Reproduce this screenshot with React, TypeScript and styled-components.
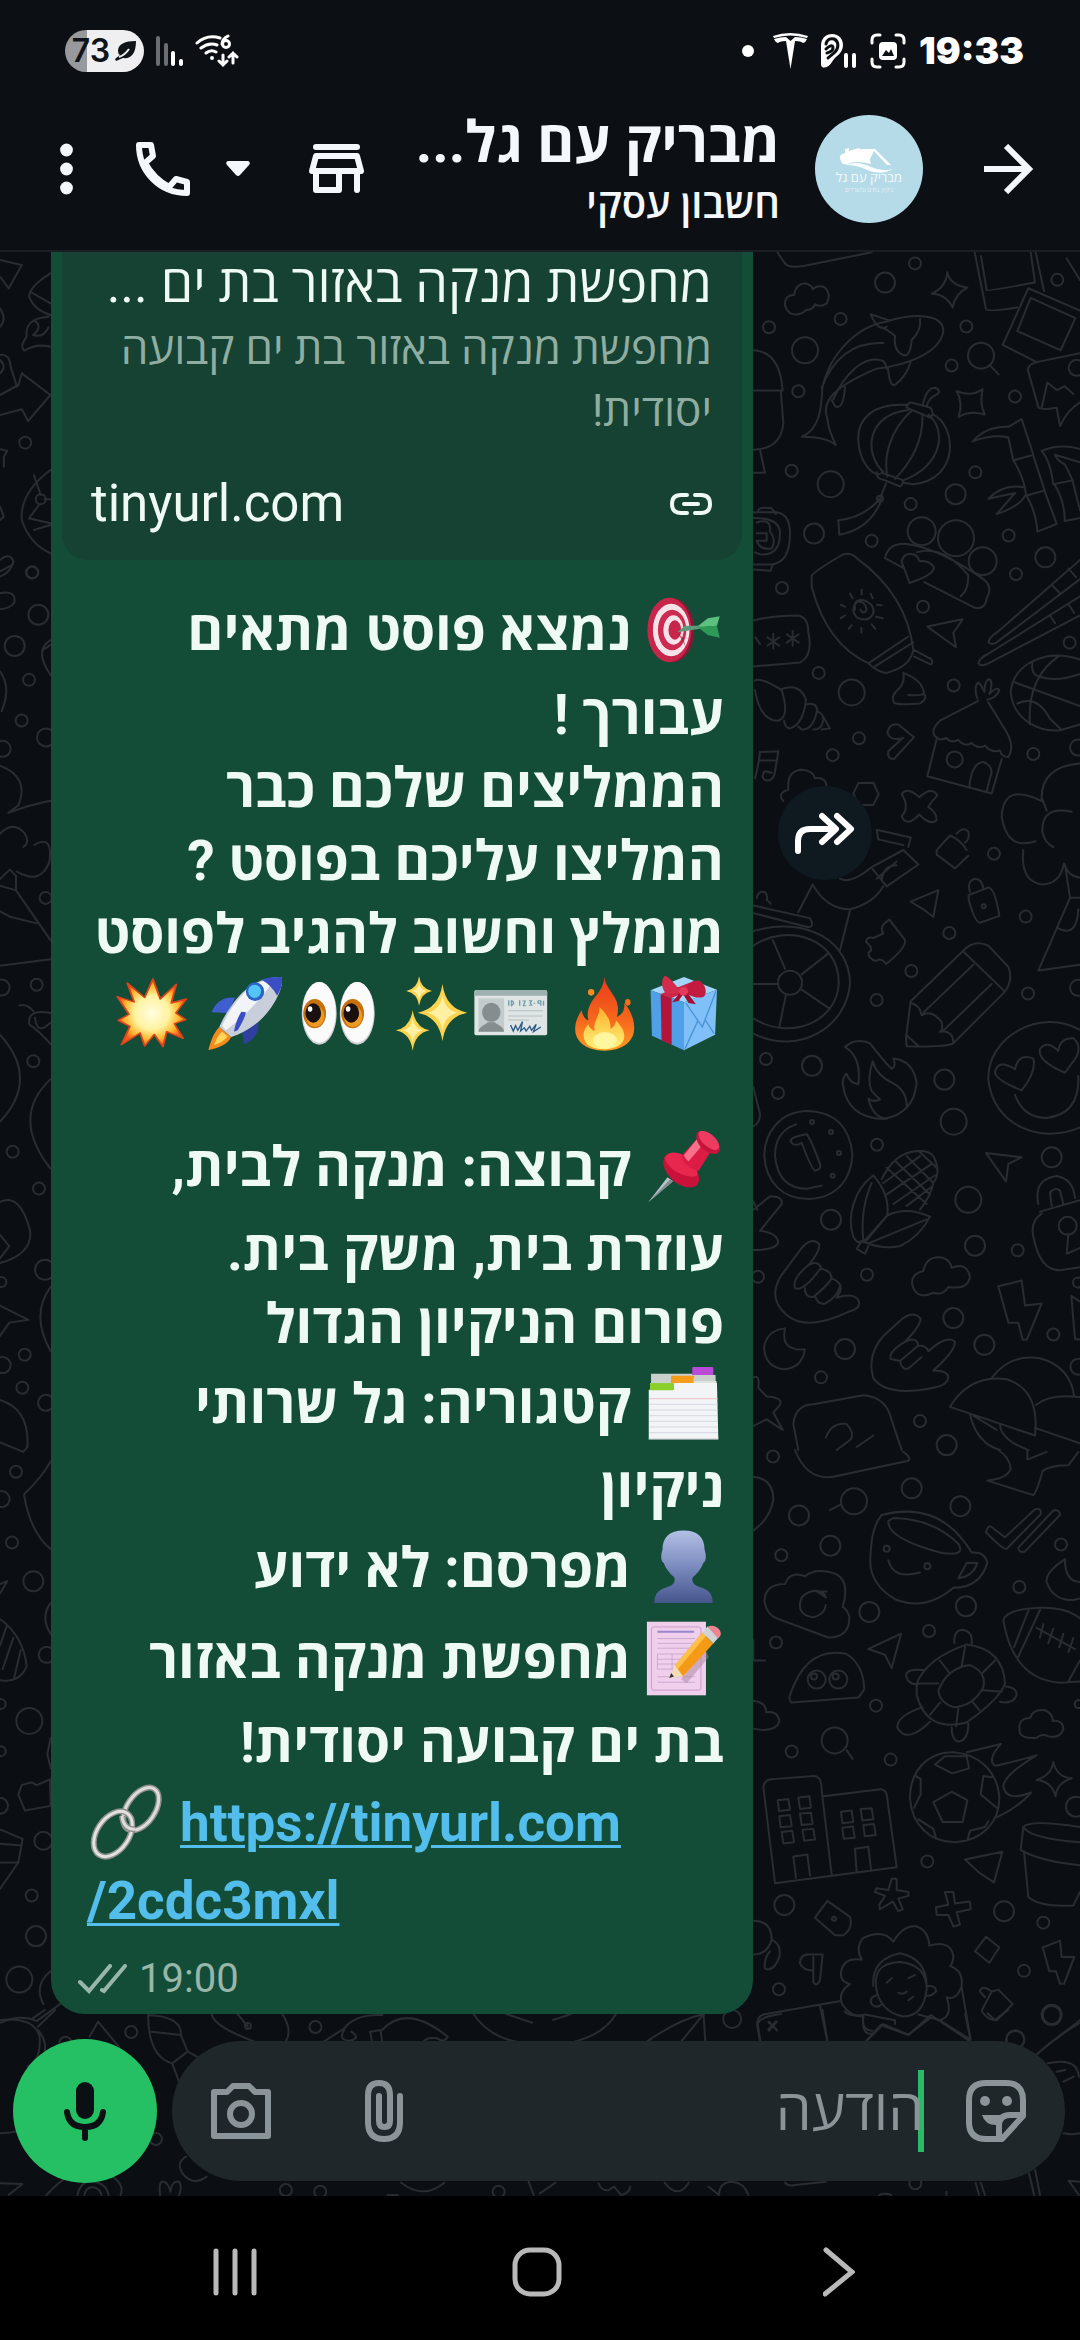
import React from "react";
import styled, { createGlobalStyle, css } from "styled-components";

const GlobalStyle = createGlobalStyle`
  *, *::before, *::after { box-sizing: border-box; }
  html, body { margin: 0; background: #000; }
  body { font-family: Roboto, "Open Sans", "Noto Sans", sans-serif; }
  button { border: 0; padding: 0; background: none; color: inherit; display: grid; place-items: center; flex: none; }
  svg { display: block; flex: none; }
`;

const ink = "#f4f7fc";

const Screen = styled.div`
  min-height: 100vh;
  display: flex;
  flex-direction: column;
  background: #0c1015;
  color: ${ink};
`;

/* ---------- status bar ---------- */

const StatusBar = styled.div`
  display: flex;
  justify-content: space-between;
  align-items: center;
  height: 101px;
  padding: 0 56px 0 65px;
  color: #fff;
`;

const StatusGroup = styled.div<{ $gap: number }>`
  display: flex;
  align-items: center;
  gap: ${(p) => p.$gap}px;
`;

const Battery = styled.div`
  display: flex;
  align-items: center;
  justify-content: center;
  gap: 5px;
  width: 79px;
  height: 42px;
  border-radius: 21px;
  background: linear-gradient(to right, #97999c 22px, #efeff1 22px);
  color: #101418;
  font: 600 32px/42px Inter, sans-serif;
`;

const Clock = styled.time`
  font: 900 37px/44px Inter, sans-serif;
`;

/* ---------- chat header ---------- */

const Header = styled.header`
  display: flex;
  align-items: center;
  padding: 0 47px 14px 60px;
  border-bottom: 2px solid #1b1f24;
`;

const Avatar = styled.div`
  display: grid;
  place-items: center;
  width: 108px;
  height: 108px;
  margin: 0 61px 0 35px;
  border-radius: 50%;
  background: #b5dae8;
  flex: none;
`;

const Contact = styled.div`
  flex: 1;
  min-width: 0;
  height: 135px;
`;

const ContactName = styled.h1`
  margin: 0;
  padding-top: 6px;
  font-size: 57px;
  line-height: 72px;
  font-weight: 700;
  white-space: nowrap;
`;

const ContactNote = styled.p`
  margin: 0;
  font-size: 40px;
  line-height: 52px;
  font-weight: 600;
`;

const HeaderActions = styled.div`
  display: flex;
  align-items: center;
  margin-right: 52px;
`;

const CallGroup = styled.div`
  display: flex;
  align-items: center;
  gap: 36px;
  margin: 0 59px 0 63px;
`;

/* ---------- conversation ---------- */

const Conversation = styled.main`
  flex: 1;
  display: grid;
  grid-template-columns: minmax(0, 1fr);
  background: #0b0f14;
  overflow: hidden;
  & > * { grid-area: 1 / 1; }
`;

const Backdrop = styled.svg`
  width: 100%;
  height: 100%;
  min-height: 0;
  contain: size;
  fill: none;
  stroke: #292d32;
  stroke-width: 2;
  stroke-linecap: round;
  stroke-linejoin: round;
  & * { vector-effect: non-scaling-stroke; }
`;

const Thread = styled.div`
  display: flex;
  flex-direction: column;
`;

const MessageRow = styled.div`
  flex: 1;
  display: flex;
  justify-content: flex-end;
  gap: 25px;
`;

const Bubble = styled.article`
  display: flex;
  flex-direction: column;
  width: 65%;
  margin-left: 51px;
  padding: 0 11px 7px;
  border-radius: 0 0 34px 34px;
  background: #144d37;
  color: #effaf4;
`;

const ForwardButton = styled.button`
  align-self: flex-end;
  width: 94px;
  height: 94px;
  margin-bottom: 1134px;
  border-radius: 50%;
  background: #0e1920;
  color: #fff;
`;

const Preview = styled.section`
  flex: 1;
  display: flex;
  flex-direction: column;
  padding: 0 30px 20px 29px;
  border-radius: 0 0 26px 26px;
  background: #164233;
`;

const PreviewTitle = styled.h2`
  margin: 0;
  font-size: 52px;
  line-height: 66px;
  font-weight: 400;
  white-space: nowrap;
`;

const PreviewText = styled.p`
  margin: 0;
  font-size: 44px;
  line-height: 62px;
  color: #90ada1;
`;

const PreviewSource = styled.div`
  display: flex;
  justify-content: space-between;
  align-items: center;
  margin-top: auto;
  font-size: 51px;
  line-height: 72px;
`;

const MessageText = styled.div`
  padding: 28px 18px 13px 25px;
  font-size: 55px;
  font-weight: 700;
`;

const Line = styled.div<{ $emoji?: boolean; $ltr?: boolean }>`
  display: flex;
  align-items: flex-start;
  gap: 13px;
  line-height: 73px;
  height: 73px;
  white-space: nowrap;
  ${(p) => p.$emoji && css`height: 91px; padding-top: 7px;`}
  ${(p) => p.$ltr && css`direction: ltr;`}
  ${(p) => p.$ltr && p.$emoji && css`height: 85px;`}
`;

const BlankLine = styled.div`
  height: 62px;
`;

const EmojiPair = styled.span`
  display: flex;
`;

const EmojiBox = styled.svg`
  width: 76px;
  height: 76px;
  margin: -3px 2px 0;
`;

const MessageLink = styled.a`
  color: #53bdeb;
  font-size: 53px;
  text-decoration: underline;
  text-decoration-thickness: 3px;
  text-underline-offset: 4px;
`;

const Receipt = styled.footer`
  display: flex;
  align-items: center;
  gap: 12px;
  direction: ltr;
  padding-left: 16px;
  font-size: 40px;
  line-height: 56px;
  color: #98b6a9;
`;

/* ---------- composer ---------- */

const Composer = styled.form`
  display: flex;
  align-items: center;
  gap: 15px;
  padding: 25px 15px 13px 13px;
`;

const Field = styled.div`
  flex: 1;
  min-width: 0;
  display: flex;
  align-items: center;
  height: 140px;
  padding: 0 39px;
  border-radius: 70px;
  background: #1f272a;
  color: #8b9498;
`;

const Caret = styled.span`
  width: 6px;
  height: 82px;
  margin: 0 42px 0 -6px;
  background: #2bbb68;
`;

const MessageInput = styled.input`
  flex: 1;
  min-width: 0;
  height: 100px;
  border: 0;
  padding: 0;
  outline: none;
  background: transparent;
  color: ${ink};
  font: 400 57px/100px Roboto, "Open Sans", "Noto Sans", sans-serif;
  &::placeholder { color: #8b9498; opacity: 1; }
`;

const FieldActions = styled.div`
  display: flex;
  align-items: center;
  gap: 94px;
`;

const MicButton = styled.button`
  width: 144px;
  height: 144px;
  border-radius: 50%;
  background: #25c063;
  color: #0b1014;
`;

/* ---------- system navigation ---------- */

const SystemNav = styled.nav`
  display: grid;
  grid-template-columns: repeat(3, 302px);
  justify-content: center;
  height: 144px;
  padding: 8px 7px 0 0;
  background: #000;
  color: #b9b9b9;
`;

/* ---------- emoji drawings ---------- */

const Emoji = ({ box, label, children }: { box: string; label: string; children: React.ReactNode }) => (
  <EmojiBox viewBox={box} preserveAspectRatio="none" role="img" aria-label={label}>
    {children}
  </EmojiBox>
);

const Target = () => (
  <Emoji box="1315 67 166 228" label="target">
    <ellipse cx="1372" cy="182" rx="48" ry="96" fill="#8f1633" />
    <ellipse cx="1366" cy="181" rx="48" ry="97" fill="#c8254b" />
    <ellipse cx="1370" cy="181" rx="40" ry="79" fill="#f6e3e8" />
    <ellipse cx="1372" cy="181" rx="31" ry="61" fill="#cc2a50" />
    <ellipse cx="1375" cy="181" rx="22" ry="44" fill="#f6e3e8" />
    <ellipse cx="1378" cy="181" rx="14" ry="29" fill="#c8254b" />
    <path d="M1384 190L1392 208L1402 232L1396 205Z" fill="#7d1a33" opacity=".6" />
    <path d="M1383 188L1400 168L1440 168L1440 176L1402 184Z" fill="#5f9a7b" />
    <path d="M1428 170L1450 146L1476 140L1470 168L1440 172Z" fill="#5cc17f" />
    <path d="M1428 172L1470 168L1476 204L1450 196Z" fill="#2f9a57" />
  </Emoji>
);

const Gift = () => (
  <Emoji box="1315 1216 166 228" label="gift">
    <path d="M1325 1262L1398 1222L1470 1260L1398 1298Z" fill="#a4d6fb" />
    <path d="M1325 1262L1398 1298V1442L1328 1398Z" fill="#4f9fe9" />
    <path d="M1398 1298L1470 1260L1466 1395L1398 1442Z" fill="#7fc0f8" />
    <path d="M1402 1300L1438 1372L1468 1264M1400 1438L1428 1354M1464 1392L1444 1350" fill="none" stroke="#4b93d6" strokeWidth="3" />
    <path d="M1347 1273L1371 1285V1426L1349 1412Z" fill="#b3143a" />
    <path d="M1347 1273L1420 1234L1440 1244L1371 1285Z" fill="#cf2247" />
    <path d="M1392 1266C1370 1228 1356 1212 1354 1222C1346 1240 1352 1266 1360 1272C1372 1276 1384 1272 1392 1266Z" fill="#d42a4c" />
    <path d="M1398 1262C1410 1232 1430 1226 1436 1238C1448 1252 1448 1276 1440 1282C1424 1288 1406 1278 1398 1262Z" fill="#c31b40" />
    <path d="M1390 1268L1372 1298L1386 1294L1396 1274L1408 1300L1424 1304L1404 1266Z" fill="#a30f32" />
    <ellipse cx="1397" cy="1265" rx="10" ry="13" fill="#e23a5c" />
  </Emoji>
);

const Fire = () => (
  <Emoji box="1139 1216 166 228" label="fire">
    <defs>
      <linearGradient id="flame" x1="0" y1="0" x2="0" y2="1">
        <stop offset="0" stopColor="#e8391c" />
        <stop offset=".6" stopColor="#f7691c" />
        <stop offset="1" stopColor="#fb9a24" />
      </linearGradient>
      <linearGradient id="core" x1="0" y1="0" x2="0" y2="1">
        <stop offset="0" stopColor="#ffb02a" />
        <stop offset="1" stopColor="#fff27a" />
      </linearGradient>
    </defs>
    <path d="M1223 1221C1224 1255 1250 1275 1252 1310C1253 1325 1252 1334 1250 1342C1262 1334 1268 1320 1266 1300C1280 1320 1288 1350 1288 1375C1288 1418 1260 1443 1223 1443C1184 1443 1158 1416 1159 1376C1160 1348 1168 1335 1173 1322C1176 1340 1180 1348 1188 1352C1182 1320 1194 1296 1206 1276C1216 1258 1222 1242 1223 1221Z" fill="url(#flame)" />
    <path d="M1212 1312C1226 1330 1238 1352 1236 1378C1244 1372 1248 1362 1248 1352C1264 1376 1272 1398 1262 1418C1250 1444 1196 1448 1182 1418C1172 1394 1180 1376 1188 1364C1190 1376 1196 1382 1202 1384C1196 1356 1214 1340 1212 1312Z" fill="url(#core)" />
    <ellipse cx="1224" cy="1412" rx="26" ry="24" fill="#fff6a0" />
    <ellipse cx="1194" cy="1268" rx="7" ry="10" fill="#f78a1c" />
    <ellipse cx="1274" cy="1298" rx="6" ry="10" fill="#f2701c" />
  </Emoji>
);

const IdCard = () => (
  <Emoji box="938 1222 166 228" label="ID card">
    <rect x="941" y="1267" width="159" height="136" rx="5" fill="#dfe5e4" />
    <path d="M941 1284V1272Q941 1267 946 1267H1095Q1100 1267 1100 1272V1284Z" fill="#9fb0b1" />
    <rect x="950" y="1292" width="56" height="100" fill="#c3cccc" />
    <ellipse cx="978" cy="1334" rx="20" ry="29" fill="#868d8e" />
    <path d="M950 1392C952 1374 966 1372 970 1364H986C990 1372 1004 1374 1006 1392Z" fill="#868d8e" />
    <path d="M1016 1298V1314M1022 1298V1314Q1032 1306 1022 1298M1040 1298V1314M1046 1300H1052L1048 1314H1054M1060 1299H1066L1063 1305L1066 1313H1060M1070 1307H1074M1080 1299V1307H1086V1299H1080M1086 1306V1314M1092 1299V1314" fill="none" stroke="#6fa0a8" strokeWidth="3" />
    <path d="M1015 1329H1090M1015 1345H1090M1015 1357H1060" stroke="#b5bfbf" strokeWidth="3" />
    <path d="M1020 1372L1026 1390L1031 1374L1036 1388L1046 1362L1042 1390L1050 1380L1054 1390L1062 1376L1066 1388L1076 1370L1070 1392L1086 1378" fill="none" stroke="#2b5a86" strokeWidth="3" />
  </Emoji>
);

const star = (x: number, y: number, w: number, h: number) =>
  `M${x} ${y - h}Q${x + w * 0.14} ${y - h * 0.14} ${x + w} ${y}Q${x + w * 0.14} ${y + h * 0.14} ${x} ${y + h}Q${x - w * 0.14} ${y + h * 0.14} ${x - w} ${y}Q${x - w * 0.14} ${y - h * 0.14} ${x} ${y - h}Z`;

const Sparkles = () => (
  <Emoji box="762 1216 166 228" label="sparkles">
    <g fill="#fbd34c">
      <path d={star(870, 1329, 54, 86)} />
      <path d={star(819, 1264, 28, 44)} />
      <path d={star(805, 1382, 37, 61)} />
    </g>
    <g fill="#fff0a4">
      <path d={star(870, 1329, 34, 54)} />
      <path d={star(819, 1264, 16, 26)} />
      <path d={star(805, 1382, 22, 36)} />
    </g>
  </Emoji>
);

const Eyes = () => (
  <Emoji box="560 1216 166 228" label="eyes">
    {[602, 685].map((x) => (
      <g key={x}>
        <ellipse cx={x} cy="1331" rx="38" ry="94" fill="#cfd0d4" />
        <ellipse cx={x} cy="1328" rx="36" ry="91" fill="#fbfbfc" />
        <ellipse cx={x - 10} cy="1332" rx="25" ry="44" fill="#c8720f" />
        <ellipse cx={x - 9} cy="1340" rx="20" ry="32" fill="#ec9a22" />
        <ellipse cx={x - 13} cy="1330" rx="17" ry="29" fill="#1a1010" />
        <ellipse cx={x - 20} cy="1318" rx="5" ry="8" fill="#fff" />
      </g>
    ))}
  </Emoji>
);

const Rocket = () => (
  <Emoji box="357 1216 166 228" label="rocket">
    <path d="M418 1284C392 1280 374 1300 367 1328L404 1330Z" fill="#3f5fd0" />
    <path d="M468 1350C474 1385 460 1412 438 1424L432 1370Z" fill="#2f3f9e" />
    <path d="M384 1372C370 1392 364 1420 360 1441C382 1436 402 1424 410 1402Z" fill="#f58a1f" />
    <path d="M390 1386C380 1398 376 1414 372 1426C386 1422 396 1412 402 1400Z" fill="#ffd65a" />
    <path d="M520 1222C470 1222 436 1258 412 1305C398 1332 390 1352 384 1372L410 1402C440 1388 474 1360 496 1316C514 1280 524 1246 520 1222Z" fill="#c9cfda" />
    <path d="M506 1226C468 1232 440 1262 418 1302C404 1328 398 1346 390 1368L398 1382C430 1350 470 1300 506 1226Z" fill="#f2f4f8" />
    <path d="M520 1222C502 1221 488 1224 476 1230Q498 1246 510 1278C520 1256 523 1238 520 1222Z" fill="#3a4fc4" />
    <ellipse cx="462" cy="1266" rx="20" ry="28" fill="#2d62c8" />
    <ellipse cx="461" cy="1265" rx="14" ry="20" fill="#52c4f5" />
    <path d="M432 1326C424 1344 418 1366 416 1386L424 1382C432 1364 440 1344 442 1328Z" fill="#3a4fc4" />
  </Emoji>
);

const burst =
  "M240 1228L256 1288L291 1244L280 1300L313 1288L290 1330L312 1350L287 1362L306 1406L270 1386L262 1431L243 1394L222 1429L212 1390L171 1425L190 1370L164 1352L188 1334L162 1281L199 1297L184 1240L222 1284Z";

const Collision = () => (
  <Emoji box="155 1216 166 228" label="collision">
    <defs>
      <radialGradient id="burst">
        <stop offset="0" stopColor="#fffde0" />
        <stop offset=".5" stopColor="#fff3a0" />
        <stop offset=".8" stopColor="#fdb62c" />
        <stop offset="1" stopColor="#ef5a1c" />
      </radialGradient>
    </defs>
    <path d={burst} fill="url(#burst)" stroke="#e0431c" strokeWidth="4" strokeLinejoin="round" />
  </Emoji>
);

const Pushpin = () => (
  <Emoji box="1315 114 166 228" label="pushpin">
    <path d="M1320 337L1362 262L1374 274Z" fill="#b9c2c6" />
    <path d="M1320 337L1368 268L1374 274Z" fill="#7f8b90" />
    <path d="M1354 206C1362 178 1388 190 1404 206C1428 232 1438 268 1426 286C1412 302 1378 286 1364 256C1356 240 1350 222 1354 206Z" fill="#c81239" />
    <path d="M1356 204C1366 176 1392 188 1408 206C1424 226 1430 246 1426 258C1406 268 1362 240 1356 204Z" fill="#e8274f" />
    <path d="M1426 148L1392 198C1396 222 1412 238 1430 242L1454 190Z" fill="#dc1c45" />
    <path d="M1426 148L1398 196C1400 204 1404 210 1408 214L1438 166Z" fill="#f9708c" />
    <path d="M1426 130C1434 112 1462 130 1472 156C1482 180 1474 194 1462 192C1442 186 1420 160 1426 130Z" fill="#c4143b" />
    <path d="M1430 128C1440 114 1464 134 1472 156C1478 174 1472 182 1464 180C1446 172 1428 150 1430 128Z" fill="#ee3b60" />
  </Emoji>
);

const IndexDividers = () => (
  <Emoji box="1315 826 166 228" label="card index dividers">
    <rect x="1416" y="832" width="46" height="28" rx="3" fill="#b94bd8" />
    <path d="M1326 852H1416V856H1467V882H1326Z" fill="#c9cfca" />
    <rect x="1370" y="858" width="50" height="24" rx="3" fill="#f59c1a" />
    <path d="M1324 880H1372V866H1420V874H1469V904H1324Z" fill="#dde2df" />
    <rect x="1370" y="860" width="49" height="20" fill="#f59c1a" />
    <rect x="1324" y="881" width="52" height="24" rx="3" fill="#8ad02c" />
    <path d="M1321 900H1376V888Q1376 880 1384 880H1470L1473 1049H1321Z" fill="#f3f4f6" />
    <rect x="1324" y="881" width="52" height="21" rx="3" fill="#8ad02c" />
    <path d="M1322 927H1472" stroke="#e8b6bd" strokeWidth="2" />
    <path d="M1322 944H1472M1322 961H1472M1322 978H1472M1322 995H1472M1322 1012H1472M1322 1029H1472" stroke="#ccd2dc" strokeWidth="2" />
    <path d="M1321 1048H1473" stroke="#c3c8cc" strokeWidth="3" />
  </Emoji>
);

const Silhouette = () => (
  <Emoji box="1315 89 166 221" label="bust in silhouette">
    <defs>
      <linearGradient id="bust" x1="0" y1="0" x2="0" y2="1">
        <stop offset="0" stopColor="#b3c0e6" />
        <stop offset=".55" stopColor="#7686ba" />
        <stop offset="1" stopColor="#46558c" />
      </linearGradient>
    </defs>
    <path d="M1397 93C1428 93 1443 112 1443 150C1446 160 1448 182 1440 188C1436 206 1424 222 1417 230C1414 244 1420 252 1432 258C1452 266 1460 276 1461 304H1333C1334 276 1342 266 1362 258C1374 252 1380 244 1377 230C1370 222 1358 206 1354 188C1346 182 1348 160 1351 150C1351 112 1366 93 1397 93Z" fill="url(#bust)" />
  </Emoji>
);

const Memo = () => (
  <Emoji box="1315 352 166 221" label="memo">
    <rect x="1317" y="357" width="129" height="214" fill="#efcfeb" />
    <rect x="1327" y="372" width="108" height="184" rx="6" fill="none" stroke="#c58fc4" strokeWidth="2" />
    <path d="M1340 386H1420" stroke="#9a86d0" strokeWidth="6" />
    <path d="M1340 406H1422M1340 420H1422M1340 434H1422M1340 451H1400M1340 466H1390M1340 480H1384M1340 495H1376M1340 451V495M1372 451V495M1340 517H1422M1340 533H1422" stroke="#c4a2cb" strokeWidth="2" fill="none" />
    <path d="M1392 524L1446 440L1452 460L1404 536Z" fill="#a983a4" opacity=".5" />
    <path d="M1378 484L1438 388L1462 420L1396 516Z" fill="#f59a16" />
    <path d="M1378 484L1438 388L1446 398L1384 496Z" fill="#ffc04a" />
    <path d="M1438 388L1450 370L1474 402L1462 420Z" fill="#cdd3d6" />
    <path d="M1450 372C1458 364 1472 370 1477 384C1480 394 1478 400 1472 405Z" fill="#ee8490" />
    <path d="M1378 484L1396 516L1366 521Z" fill="#f3dcb8" />
    <path d="M1370 506L1376 516L1366 521Z" fill="#3a3032" />
  </Emoji>
);

const LinkEmoji = () => (
  <Emoji box="0 0 76 76" label="link">
    <g fill="none">
      <ellipse cx="52" cy="25" rx="24" ry="14" transform="rotate(-56 52 25)" stroke="#8f8f8f" strokeWidth="6" />
      <ellipse cx="52" cy="25" rx="24" ry="14" transform="rotate(-56 52 25)" stroke="#dcdcd8" strokeWidth="3" />
      <ellipse cx="24" cy="50" rx="25" ry="16" transform="rotate(-56 24 50)" stroke="#8f8f8f" strokeWidth="6" />
      <ellipse cx="24" cy="50" rx="25" ry="16" transform="rotate(-56 24 50)" stroke="#e2e2de" strokeWidth="3" />
      <path d="M33 32C34 42 40 46 46 45" stroke="#8f8f8f" strokeWidth="6" />
      <path d="M33 32C34 42 40 46 46 45" stroke="#dcdcd8" strokeWidth="3" />
    </g>
  </Emoji>
);

/* ---------- interface icons ---------- */

const Leaf = () => (
  <svg width="22" height="20" viewBox="0 0 22 20" fill="currentColor">
    <path d="M21 0C10 0 3 3 3 10Q3 13 5 14L0 18L1 20L8 17C15 18 21 14 21 0Z" />
    <path d="M4 16Q10 14 14 8" stroke="#efeff1" strokeWidth="2" fill="none" />
  </svg>
);

const Signal = () => (
  <svg width="27" height="30" viewBox="0 0 27 30" stroke="currentColor" strokeWidth="4" strokeLinecap="round">
    <path d="M2 2V28M10 9V28" stroke="#6b6e72" />
    <path d="M17 17V28M25 25V28" />
  </svg>
);

const Wifi = () => (
  <svg width="44" height="34" viewBox="0 0 44 34" fill="none" stroke="currentColor" strokeWidth="3" strokeLinecap="round">
    <path d="M2 9Q12 0 25 4M6 14Q14 8 22 11M11 19Q16 15 21 18" />
    <circle cx="17" cy="24" r="2" fill="currentColor" stroke="none" />
    <path d="M33 2Q27 5 27 10" />
    <circle cx="31" cy="10" r="3.500" />
    <path d="M28 21V31M24 27L28 31L32 27M38 29V19M34 23L38 19L42 23" strokeWidth="3" />
  </svg>
);

const Dot = styled.span`
  width: 12px;
  height: 12px;
  margin-right: 6px;
  border-radius: 50%;
  background: #fff;
`;

const Tesla = () => (
  <svg width="35" height="36" viewBox="0 0 35 36" fill="currentColor">
    <path d="M0 3Q17 -3 35 3L34 5Q17 0 1 5Z" />
    <path d="M1 6Q7 4 13 4L17.500 8L22 4Q28 4 34 6Q33 9 30 10Q28 8 22 8L17.500 36L13 8Q7 8 5 10Q2 9 1 6Z" />
  </svg>
);

const Ear = () => (
  <svg width="36" height="34" viewBox="0 0 36 34" fill="none">
    <path d="M0 12C0 4 5 0 11 0C18 0 22 5 22 11C22 20 14 22 11 28C8 34 0 36 0 30Z" fill="#fff" />
    <path d="M5 10C6 5 10 4 13 5C18 7 18 14 14 18C11 21 9 22 7 24M5 15C8 12 12 10 12 14C12 18 8 18 6 19" stroke="#0c1015" strokeWidth="3" strokeLinecap="round" />
    <path d="M25 21V32M33 21V32" stroke="#fff" strokeWidth="4" strokeLinecap="round" />
  </svg>
);

const Capture = () => (
  <svg width="36" height="36" viewBox="0 0 36 36" fill="none">
    <path d="M2 10V7Q2 2 7 2H10M26 2H29Q34 2 34 7V10M34 26V29Q34 34 29 34H26M10 34H7Q2 34 2 29V26" stroke="#fff" strokeWidth="3" strokeLinecap="round" />
    <rect x="9" y="9" width="18" height="18" rx="4" fill="#fff" />
    <path d="M12 23L16 17L19 20L21 16L24 23Z" fill="#0c1015" />
  </svg>
);

const BackArrow = () => (
  <svg width="49" height="50" viewBox="0 0 49 50" fill="none" stroke="currentColor" strokeWidth="6">
    <path d="M0 25H45M22 2L45 25L22 48" />
  </svg>
);

const AvatarLogo = () => (
  <svg width="72" height="48" viewBox="0 0 72 48" fill="#fff">
    <path d="M8 16Q4 10 12 8V4L16 3V6L26 3L36 12L38 19Q24 15 14 19Q9 20 8 16Z" />
    <path d="M28 4H42L58 20H54L41 6L36 16Z" />
    <path d="M12 20Q24 15 38 22Q50 27 60 24Q48 31 34 25Q24 20 12 20Z" opacity=".9" />
    <g fontFamily='"Open Sans", sans-serif' textAnchor="middle" direction="rtl">
      <text x="36" y="37" fontSize="13" opacity=".85">מבריק עם גל</text>
      <text x="36" y="47" fontSize="6" opacity=".6">ניקיון בתים ומשרדים</text>
    </g>
  </svg>
);

const Store = () => (
  <svg width="56" height="50" viewBox="0 0 56 50" fill="none" stroke="currentColor" strokeWidth="6" strokeLinecap="round" strokeLinejoin="round">
    <path d="M7 3H48M7 12H48L52 27H3ZM7 27V46H30V27M48 27V46" />
  </svg>
);

const DropArrow = () => (
  <svg width="24" height="16" viewBox="0 0 24 16" fill="currentColor">
    <path d="M2 0H22Q25 1 23 4L14 14Q12 16 10 14L1 4Q-1 1 2 0Z" />
  </svg>
);

const Phone = () => (
  <svg width="54" height="54" viewBox="0 0 54 54" fill="none" stroke="currentColor" strokeWidth="6" strokeLinejoin="round">
    <path d="M3 3H15L17 14L9 21C15 32 22 39 33 45L40 37L51 40V51C24 51 3 30 3 3Z" />
  </svg>
);

const More = () => (
  <svg width="13" height="52" viewBox="0 0 13 52" fill="currentColor">
    <circle cx="6.500" cy="7" r="6.400" />
    <circle cx="6.500" cy="26" r="6.400" />
    <circle cx="6.500" cy="45" r="6.400" />
  </svg>
);

const LinkIcon = () => (
  <svg width="42" height="22" viewBox="0 0 42 22" fill="none" stroke="currentColor" strokeWidth="4" strokeLinecap="round">
    <path d="M17 2H11Q2 2 2 11Q2 20 11 20H17M25 2H31Q40 2 40 11Q40 20 31 20H25M14 11H28" />
  </svg>
);

const Forward = () => (
  <svg width="62" height="44" viewBox="0 0 62 44" fill="none" stroke="currentColor" strokeWidth="6" strokeLinecap="round" strokeLinejoin="round">
    <path d="M4 40V30Q4 18 16 18H38M28 5L42 18L28 31M43 5L57 18L43 31" />
  </svg>
);

const Ticks = () => (
  <svg width="49" height="30" viewBox="0 0 49 30" fill="none" stroke="currentColor" strokeWidth="4" strokeLinecap="round">
    <path d="M2 18L11 27L32 2M24 26L26 27L47 2" />
  </svg>
);

const Sticker = () => (
  <svg width="60" height="62" viewBox="0 0 60 62" fill="none" stroke="currentColor" strokeWidth="6" strokeLinejoin="round">
    <path d="M20 3H40Q57 3 57 20V36L36 59H20Q3 59 3 42V20Q3 3 20 3Z" />
    <path d="M57 35H44Q33 35 33 46V59" />
    <circle cx="19" cy="21" r="5" fill="currentColor" stroke="none" />
    <circle cx="41" cy="21" r="5" fill="currentColor" stroke="none" />
    <path d="M16 35H40L34 45H30Q19 45 16 35Z" fill="currentColor" stroke="none" />
  </svg>
);

const Clip = () => (
  <svg width="38" height="62" viewBox="0 0 38 62" fill="none" stroke="currentColor" strokeWidth="6" strokeLinecap="round">
    <path d="M35 16V42Q35 59 19 59Q3 59 3 42V15Q3 3 14 3Q25 3 25 15V41Q25 47 19.500 47Q14 47 14 41V16" />
  </svg>
);

const Camera = () => (
  <svg width="60" height="56" viewBox="0 0 60 56" fill="none" stroke="currentColor" strokeWidth="6" strokeLinejoin="round">
    <path d="M3 9H16L22 3H38L44 9H57V53H3Z" />
    <circle cx="30" cy="31" r="11" />
  </svg>
);

const Mic = () => (
  <svg width="42" height="60" viewBox="0 0 42 60" fill="none" stroke="currentColor" strokeWidth="6" strokeLinecap="round">
    <rect x="12" y="1" width="18" height="37" rx="9" fill="currentColor" stroke="none" />
    <path d="M3 31Q5 46 21 46Q37 46 39 31M21 46V57" />
  </svg>
);

/* ---------- doodle wallpaper ---------- */

type Patch = { at: string; sx: number; sy: number; dots: string; lines: string[] };

const patches: Patch[] = [
  {
    at: "translate(740 250)", sx: 3, sy: 2.613,
    dots: "525 35 6,87 202 6,302 180 6,679 200 6,952 78 6,175 369 6,635 302 6,825 383 6,155 577 6,512 664 6,706 581 6,395 760 6,806 746 6,126 883 6,828 847 6,549 932 6,236 1105 6,641 1138 6,989 1026 6,357 1276 6,278 1320 6,880 1317 6,435 85 10,222 741 10,647 638 10,916 803 10,644 1331 8,195 262 13,272 612 13,335 1156 13,723 276 13,545 735 14,648 753 18,728 813 14,1010 308 8,1014 1300 8,420 650 3",
    lines: [
      "M112 6L135 35Q145 48 190 42L395 6M704 6L738 155Q740 162 832 150M887 6L912 108M723 16L740 105Q742 108 885 85L872 6M980 22L1020 78",
      "M865 100L1020 158M865 100L788 248L890 293L1020 270M872 125L1006 178L962 262L832 212ZM890 293Q862 300 864 315L895 410Q900 420 950 412L960 460Q980 420 1020 398M905 412L922 346L950 366L974 356L1000 376",
      "M150 165Q125 145 140 125Q152 115 162 118Q168 88 195 87Q218 92 218 103Q232 90 255 98Q275 115 260 140Q240 150 226 142Q214 158 200 156Q175 175 150 165Z",
      "M622 58Q630 92 682 98Q645 115 638 150Q618 115 575 114Q618 98 622 58ZM650 368Q690 385 728 364Q718 400 734 430Q690 418 656 436Q670 400 650 368ZM748 300L776 325",
      "M186 488C235 470 245 420 247 360C270 270 350 200 440 187C520 165 610 165 610 212C600 270 500 300 410 310C300 350 240 390 262 440Q265 470 288 510Q260 488 186 488M392 168Q415 215 440 200M392 168L448 184M540 180Q545 210 515 235Q510 290 480 270Q460 255 465 225Q440 205 415 200M245 360C280 280 340 240 430 243M280 390C310 330 370 270 430 290Q440 300 440 310M444 310Q450 360 465 352Q500 330 512 292M315 358Q310 420 285 408Q280 400 275 392",
      "M500 405C400 400 350 440 355 500C360 560 400 590 420 585M505 418C380 430 370 530 430 580M515 420C450 470 430 540 442 592M547 428C550 480 530 540 465 598M565 430C620 470 610 560 490 602M580 430C650 460 660 600 520 612L490 608M500 410Q505 395 520 400L572 412Q585 430 570 438L500 412M410 580Q410 600 430 600L480 618Q495 608 485 600L425 582M548 405Q560 360 585 360Q610 370 585 380Q565 390 560 408M438 610L420 650Q370 700 295 706L298 744Q390 730 425 652",
      "M698 500Q740 460 805 462L845 442L880 535L820 550L805 490Q760 480 698 500M822 552Q855 600 858 642L914 628L880 538M860 642Q890 690 892 736L950 716L914 630M745 650Q790 610 850 620M745 650L825 635L770 690Q840 670 855 642M905 525Q960 505 1020 520M905 525Q930 550 940 612L998 602L975 560Q950 550 945 535L1020 555M945 615Q975 660 974 708L1020 700M998 604L1020 680",
      "M435 805Q445 765 500 768Q600 780 730 860Q760 880 740 910Q735 940 705 935L553 868M435 805L488 830M530 790Q610 770 685 850Q685 890 662 905M508 868L485 815Q490 790 520 795Q535 800 538 813Q570 810 582 830Q580 850 508 870Z",
      "M215 850Q240 830 310 795Q335 790 350 805Q500 900 520 1045Q510 1090 440 1105Q415 1105 385 1080Q260 1030 215 880ZM385 1080L505 1010M405 1088L520 1025M522 1045L575 1070Q580 1085 570 1082L522 1062M345 940Q340 910 370 915Q405 925 400 950Q385 975 350 960Q330 940 350 920Q375 915 380 940Q370 955 362 940M365 888V900M392 898L398 910M411 927L425 928M408 958L428 962M395 978L406 990M364 988V1000M335 980L326 990M315 955L302 962M315 932L302 927M338 910L330 898",
      "M40 262Q120 265 128 367H40M122 367L130 450Q125 520 40 522M60 522L75 582H40M40 685H110Q150 690 150 740Q150 820 90 822H40M55 680Q60 670 95 675L108 690M40 700Q120 700 120 740Q120 800 60 795L45 790M50 712Q95 700 90 735Q110 760 95 780Q60 785 50 760H80V740H50M98 822L92 838L40 835M40 968Q100 955 175 955Q205 960 205 1000Q220 1060 180 1078L40 1088M100 1003V1042M82 1012L118 1034M118 1012L82 1034M158 995V1034M140 1004L176 1026M176 1004L140 1026M46 1012L60 1030",
      "M45 1125Q60 1115 125 1150Q150 1220 115 1230Q60 1230 45 1150M122 1148Q180 1130 198 1175Q190 1240 150 1250Q135 1250 132 1230M198 1188Q225 1180 232 1200Q220 1255 185 1253L175 1245M230 1205Q250 1210 250 1228Q245 1255 220 1253M250 1220L270 1250L245 1253M45 1380Q55 1350 60 1312L115 1310L104 1368Q98 1390 75 1385Q60 1375 75 1362L95 1366M58 1334H105",
      "M562 984L668 965L640 1000L648 1038ZM490 1105Q495 1130 478 1145Q450 1165 462 1183Q480 1190 540 1185Q565 1170 552 1160Q540 1165 505 1163M490 1105Q550 1125 552 1160M490 1275Q450 1285 442 1260Q450 1235 475 1240L522 1273L462 1330Q440 1330 445 1310L485 1278",
      "M715 1080Q720 1065 745 1055L1020 905M715 1080Q725 1090 745 1080L1020 955M745 1025Q750 1010 770 1000L1020 810M745 1025Q760 1035 775 1022L1020 860M935 875L958 895M985 832L1008 855M930 955L945 975M985 925L1002 948",
      "M1020 1070C920 1040 820 1080 812 1155C820 1230 900 1260 960 1255L1020 1240M825 1130L1020 1192M878 1075Q870 1110 900 1115Q950 1130 1020 1108M955 1062Q860 1120 870 1240M832 1185Q890 1160 930 1225L965 1254",
      "M712 1172Q700 1140 715 1130Q728 1140 733 1155Q735 1120 750 1122Q760 1135 748 1160Q770 1140 778 1150Q770 1170 742 1175M715 1178L600 1230Q570 1255 585 1270Q600 1285 618 1275Q635 1290 655 1280Q675 1300 695 1288Q715 1305 735 1295Q755 1315 780 1308Q785 1325 805 1325Q825 1300 800 1260L745 1182M590 1278L562 1375L755 1420L785 1330M688 1402Q695 1340 730 1338Q765 1350 750 1380L740 1415",
      "M485 1422Q500 1400 538 1430Q575 1400 592 1425Q575 1440 565 1455Q590 1470 590 1490Q570 1505 538 1475Q500 1510 485 1480Q510 1455 485 1422M340 1420L355 1393L400 1392L416 1422L400 1450L355 1450ZM130 1440Q110 1420 145 1410Q140 1360 185 1358Q220 1360 225 1380Q260 1375 260 1408M1020 1342Q900 1350 905 1440Q790 1390 785 1480Q800 1570 887 1545M905 1430L920 1465M995 1468Q905 1450 907 1520Q915 1550 940 1560M410 1515L512 1535L505 1560M410 1515L415 1540L490 1555M590 1568L630 1530Q660 1540 680 1568M650 1525Q670 1505 685 1520Q690 1540 675 1548",
    ],
  },
  {
    at: "translate(740 850)", sx: 3, sy: 2.613,
    dots: "762 10 6,857 174 6,628 217 6,514 316 6,410 392 6,864 375 6,78 546 6,114 635 6,411 770 6,381 1110 6,833 1046 6,940 1266 6,243 1378 6,540 1492 6,54 1115 6,216 564 10,613 600 10,935 803 10,273 966 10,705 1034 10,640 1223 10,733 1293 10,315 1304 10,1014 360 8,620 1555 10,1015 1350 8,641 710 13,685 914 13,983 982 9,150 347 12,216 711 2,273 737 2,297 792 2,278 851 2,731 147 2,1014 1130 5",
    lines: [
      "M40 145L210 178Q225 200 205 202L40 165M50 125Q55 105 75 110Q85 120 80 130L92 140M175 162L218 90Q260 155 330 155Q400 140 430 95M330 158L300 262M300 75Q330 90 395 45L490 0L535 38L440 95L398 50M410 75L470 30M425 80Q430 40 470 40",
      "M40 212C200 170 330 240 330 350C320 460 180 540 40 480M40 250C140 190 300 230 296 350C290 450 150 500 40 440M98 235L135 310M262 272L185 325M270 415L185 365M118 462L138 378M40 350H112",
      "M512 135L595 105L580 175L550 155ZM686 118L745 98Q765 100 778 172L720 190Q705 190 686 130ZM690 110Q680 80 705 75Q725 75 730 100M378 240Q380 225 400 230L430 218Q415 200 448 182L495 235Q500 255 438 298Q425 280 408 290Q385 285 385 268Q405 260 378 240M590 12L645 48L685 15M590 0V12",
      "M512 395L680 255Q710 235 745 250L805 305Q820 340 795 370L640 505Q620 515 500 513L498 490ZM670 265L795 370M512 400Q540 405 545 432Q575 415 605 450Q610 470 600 475Q640 470 640 505M550 425L700 300M610 472L755 350M500 485L535 512",
      "M850 0Q840 80 905 90Q960 90 972 35Q985 70 1020 72M975 38L990 125L895 315L1020 300M990 125H1020M955 205Q1010 230 1015 155",
      "M1020 470C900 410 740 490 745 600C760 720 900 770 1020 725M825 640Q850 700 920 700Q1020 690 1015 590M845 628Q765 600 765 580Q775 545 825 573Q835 530 880 545Q890 580 845 628ZM975 582Q890 550 900 520Q920 495 955 525Q960 490 1000 492Q1025 510 1010 540Z",
      "M315 515Q345 490 390 505Q430 550 455 572Q470 565 460 545Q520 550 530 610Q520 690 430 703Q320 700 308 610Q310 590 320 585Q330 610 355 612Q365 540 315 515M398 552Q410 590 460 610Q500 630 500 668M398 552Q380 600 395 630L420 652Q400 660 385 650Q400 700 440 702",
      "M205 682C120 682 72 740 73 800C78 870 130 912 205 912C290 910 335 860 337 795C330 730 290 685 205 682ZM168 717Q105 735 105 800Q115 885 200 885L245 877M152 760Q150 750 200 743Q210 750 240 820Q245 835 225 838Q215 835 185 765Q160 778 152 760M738 792L845 803L805 820L798 866Z",
      "M400 850C340 890 320 960 340 1010Q350 1030 365 1022M400 850Q450 900 442 955L370 1025M395 870Q360 940 370 1020M570 958Q500 930 442 955L375 1025Q430 1045 480 1035Q540 1010 570 958M560 965L385 1028M365 1022L350 1042L375 1055L385 1035M425 860Q460 800 510 790Q560 780 580 800Q605 840 580 870Q575 900 540 940M440 830L560 925M465 812L570 900M500 800L580 870M540 790L590 830M430 870L540 800M440 900L575 820M460 925L585 850M500 930L575 880",
      "M520 1145Q505 1110 550 1100Q560 1060 605 1065Q630 1070 635 1092Q680 1075 690 1115Q685 1150 625 1142Q610 1165 580 1157Q535 1175 520 1145M775 1140L845 1125L855 1190L905 1185L860 1280L848 1280L835 1235H805ZM895 925Q880 860 950 852Q1000 860 1005 910M900 945L1020 915M930 895Q945 880 960 890L970 925M930 895L935 930M905 950Q870 970 880 1010Q900 1100 960 1098L1020 1090M985 1003L980 1055L1020 1040",
      "M185 1040Q215 1010 238 1030Q240 1050 205 1085Q235 1070 245 1095Q275 1100 275 1120Q310 1130 300 1155L290 1170Q345 1155 357 1180Q360 1200 330 1205Q200 1260 140 1215Q80 1170 125 1110ZM205 1085Q155 1120 165 1145Q190 1155 240 1095M195 1145Q195 1170 220 1168Q260 1140 275 1120M225 1165Q235 1190 255 1185Q290 1170 300 1140M40 940L90 905Q130 905 125 925L60 995Q110 1000 115 1025Q110 1045 40 1045M40 918L52 940",
      "M135 1250Q120 1310 195 1305Q185 1355 130 1357Q75 1350 72 1300Q80 1255 135 1250M480 1230Q520 1200 542 1225Q540 1245 495 1285Q530 1270 535 1295Q560 1295 565 1310Q620 1265 645 1285Q645 1310 580 1360Q625 1360 625 1380Q620 1400 580 1405Q440 1430 400 1380Q380 1320 430 1270ZM495 1285Q445 1310 452 1330L480 1335L535 1295M480 1335Q485 1360 505 1355L545 1325",
      "M1020 1280L1005 1278L994 1165L1020 1180M630 1455Q690 1370 800 1383Q900 1410 885 1530ZM755 1380Q810 1315 900 1328Q990 1350 1002 1425M888 1450Q930 1420 1020 1430M690 1475Q710 1550 780 1568M885 1510L1020 1550M780 1500Q780 1540 865 1568M700 1478L770 1515M160 1500Q165 1450 220 1448L370 1425Q440 1430 455 1490L485 1568M160 1500L175 1568M258 1535Q275 1495 320 1500Q350 1530 325 1545L290 1568M350 1560L400 1530M40 1378Q60 1370 55 1405L80 1428Q130 1430 120 1450L100 1470L128 1515L80 1488L40 1505M40 620L60 690Q60 715 40 722",
    ],
  },
  {
    at: "translate(740 1450)", sx: 3, sy: 2.613,
    dots: "99 17 6,124 275 6,108 503 6,155 788 6,452 809 6,408 668 6,567 473 6,963 247 6,838 358 6,562 1075 6,910 1235 6,852 1361 6,117 1409 6,1016 664 4,515 100 10,661 147 10,177 171 10,271 250 10,388 423 10,678 408 10,133 1189 10,792 1205 10,935 1476 10,1008 932 10,342 134 13,284 759 13,230 600 9,295 600 9,826 1540 9,440 258 3,562 304 3,282 1225 2,222 592 3,287 592 3",
    lines: [
      "M165 0Q200 80 280 70L505 28Q515 20 490 5M40 70Q100 75 100 130Q90 180 40 210M303 142L270 157M775 0Q810 20 812 50Q800 75 742 80L880 118Q890 110 908 55Q930 40 985 40L1015 5M862 0V25L920 5",
      "M425 170Q600 130 695 268Q735 265 742 295Q720 360 640 360Q560 420 470 392Q380 350 392 270Q395 200 425 170M445 185Q440 230 600 268Q680 280 655 245Q580 180 460 178ZM445 288Q460 340 540 320M655 335L680 295H712Q700 330 655 335M738 215Q745 190 760 205L795 228L885 155Q905 150 902 168L800 258Q790 262 738 215M835 255L940 158Q960 155 960 170L855 265Q835 270 835 255",
      "M975 285Q915 320 920 345Q940 395 1000 392L1020 388M975 285Q975 345 1020 345M790 445Q800 415 900 412Q980 410 1020 440M790 445Q820 600 960 608L1020 605M865 420L822 515M900 418L835 540M890 465L1005 520M910 455L900 490M940 467L925 505M970 480L958 515M1000 492L985 528M1020 550L985 605",
      "M135 350Q75 350 73 395Q80 430 110 440L265 490Q330 490 328 435Q320 415 308 410Q330 345 290 325Q230 305 195 330Q150 315 135 350M258 385L232 370L260 370M255 378Q220 355 185 385Q165 430 220 437Q255 430 257 405M385 520L483 480L455 570L435 535ZM150 640Q200 510 320 533Q370 560 373 625L355 647L155 660Q145 655 150 640M40 497V550H75M40 655Q80 660 78 685Q115 680 118 710Q105 740 40 728",
      "M530 610Q560 545 680 508Q790 520 795 610Q780 650 680 712Q560 740 530 640ZM595 630Q620 570 690 562Q740 580 730 620Q700 670 640 672Q600 660 595 630M600 550L628 582M675 515L665 565M765 550L728 582M785 632L730 628M718 680L695 655M648 722L655 675M570 692L600 660M530 610H595M643 505Q640 470 670 470Q700 475 695 508M550 575Q500 570 498 590Q505 615 535 612M798 618Q830 620 830 640Q820 665 780 658M548 672Q470 695 472 725Q500 770 570 710M635 725Q635 760 658 762Q685 755 685 715",
      "M840 740Q830 700 870 700Q880 675 915 680Q940 690 938 708Q970 705 970 730Q960 755 925 748Q905 740 890 752Q850 755 840 740M320 785L338 807M640 790C560 790 510 840 510 910C515 980 570 1025 645 1025C730 1020 780 970 778 905C770 840 720 795 640 790ZM580 920L635 893L682 915L668 972H608ZM585 822L615 800H680L687 832L637 845ZM525 850L542 860V900L522 935M755 855L730 852L722 900L770 935M535 965L580 990L587 1010M745 970L735 985L690 995L682 1020M680 790L783 768Q740 810 765 825Q800 820 890 798Q790 850 790 880Q800 920 873 895Q840 930 770 960",
      "M940 815Q950 855 995 858Q950 870 947 905Q935 865 890 862Q935 850 940 815ZM70 880Q75 860 100 860L220 852Q245 850 245 890L275 1110M70 880L105 1132L470 1090L440 900Q435 885 415 887L250 905M113 915L145 912L150 940L117 943ZM175 908L208 905L213 935L180 938ZM118 957L150 954L155 983L122 986ZM180 950L213 948L218 977L185 980ZM125 998L157 995L162 1025L130 1028ZM188 992L220 990L225 1018L192 1021ZM303 945L335 942L340 972L307 975ZM362 938L395 936L400 965L367 968ZM307 987L339 984L344 1013L311 1016ZM370 980L402 977L407 1006L374 1009ZM168 1118L160 1062L202 1057L210 1112M350 1103L345 1042L385 1037L393 1095",
      "M850 985Q870 965 1020 985M850 985Q870 1015 1020 1025M850 985L842 1045Q900 1075 1020 1085M852 1050L865 1168Q900 1195 1000 1190L1020 1155M675 1070L787 1050L762 1130L718 1105ZM225 1222L262 1178L330 1220Q340 1250 310 1268H285ZM455 1120H470V1150L505 1155V1165L475 1172L488 1200L475 1205L458 1180L420 1200L418 1188L435 1165L405 1155L410 1145L445 1150ZM615 1155H640L645 1185L690 1180L692 1200L650 1208L660 1240L640 1245L625 1215L590 1215L588 1195L625 1188ZM705 1310L738 1272L778 1300L748 1340ZM720 1415Q725 1395 755 1415M720 1415L735 1430M755 1415L775 1410L818 1448L770 1490Q740 1490 725 1465ZM908 1300L960 1282L965 1325L1003 1325L972 1395H960L948 1362H928Z",
      "M180 1342Q180 1315 215 1318H248L240 1385Q230 1405 220 1390V1360Q190 1360 180 1342M220 1360V1325M40 1230Q95 1230 95 1280Q80 1320 40 1318M95 1280Q125 1290 118 1325Q100 1365 75 1355Q70 1330 90 1310M460 1285Q430 1250 370 1275Q345 1300 365 1332Q310 1325 303 1365Q300 1390 330 1395Q290 1420 308 1450Q330 1480 370 1480Q365 1530 395 1525M460 1285Q490 1240 530 1245Q565 1255 568 1295Q630 1280 640 1320Q640 1340 630 1348Q670 1360 665 1400Q650 1440 620 1430Q640 1480 600 1490M400 1400Q395 1330 480 1315Q560 1330 560 1400M412 1420Q390 1340 480 1338Q560 1345 560 1410Q550 1480 490 1480Q430 1470 412 1420M412 1425Q385 1430 395 1448Q410 1460 422 1450M562 1400Q590 1400 588 1415Q570 1430 558 1425M440 1392L455 1380M505 1380L525 1372M475 1418Q490 1425 500 1415M505 1438L520 1428M375 1475L465 1490V1500M535 1475L600 1490L690 1540M385 1540L430 1500L505 1528L570 1485M665 1405L692 1540M302 1440L70 1475Q50 1480 52 1505L60 1545M240 1452L262 1545M85 1495L108 1512M108 1493L85 1514M1020 1490L915 1560M0 1450",
    ],
  },
  {
    at: "translate(0 240)", sx: 2.063, sy: 3,
    dots: "52 608 6,66 998 6,84 778 5",
    lines: [
      "M0 60L45 75L18 145L0 110M104 100Q60 140 60 170Q70 210 104 225M62 155L104 190M0 205Q15 240 0 260M100 230Q50 235 55 290Q40 320 50 332Q75 310 104 320M70 240Q90 260 68 285Q90 295 100 262M0 345Q20 340 22 380L35 440M0 465L38 435L45 400L104 465L58 543L45 508L0 525M0 360Q15 380 0 400M104 690Q40 760 45 840Q60 910 104 940M84 765L70 705M92 778H104M80 795L60 835M60 835L104 850M70 870L104 855M0 628L15 632L8 650V680M0 800L8 830L0 840M0 960Q20 935 28 965Q20 1000 0 1010",
    ],
  },
  {
    at: "translate(0 560)", sx: 3, sy: 1.0595,
    dots: "97 13 6,87 127 6,65 170 6,110 450 6,100 531 6,38 627 6,117 666 6,74 842 6,67 877 6,48 966 6,36 1041 6,95 1415 6,137 358 6,4 765 5,2 1212 5,2 1262 5,115 58 10,44 91 10,8 200 8,5 453 8,8 853 8,5 995 8,140 1160 8,138 893 8,135 752 10,138 188 9,100 1082 10,130 1357 9,108 1458 10,88 1230 13,58 1504 13,0 1320 8",
    lines: [
      "M0 35Q50 32 43 45Q30 52 0 52M0 12L38 5M0 118Q35 135 5 160M152 85Q100 95 152 122M130 95L152 90M0 218Q90 230 55 260L25 268Q80 260 152 255M0 290Q40 275 75 290Q90 300 70 304M103 302Q160 290 148 320Q120 345 50 330M0 338L30 328L48 335V350L152 403M0 345L48 350M0 372L30 378L110 385M0 430L152 423M58 472Q80 470 100 478M152 480Q80 475 88 492Q120 500 152 513M105 485Q110 500 135 495L152 490",
      "M0 503Q120 550 0 595M152 550Q30 590 152 645M0 680Q60 670 90 710Q100 735 0 745M0 715L28 727L0 740M0 790L85 805L28 808L0 822M152 770Q90 800 152 838M0 890Q90 900 82 940L70 945L0 935M152 955Q130 970 72 990Q90 1030 152 1048M0 1085L22 1082L0 1095M0 1122Q70 1140 80 1172Q60 1190 0 1187M20 1130L0 1150M40 1142L8 1175M62 1155L42 1185M152 1105Q120 1120 152 1138M65 1298L95 1295L110 1298L150 1292L152 1320L75 1325L55 1308ZM0 1345L68 1355L55 1380L0 1408M0 1360L65 1362M0 1380H55M152 1248L142 1265L152 1280M0 1550Q60 1540 110 1548L180 1530M152 1495Q100 1510 130 1530",
    ],
  },
  {
    at: "translate(0 2010)", sx: 2.904, sy: 3,
    dots: "381 66 6,916 51 6,830 540 6,930 545 6,1448 545 6,453 387 6,190 98 6,720 48 3",
    lines: [
      "M0 30Q100 20 115 80Q120 150 80 170M95 25L130 0M110 50L160 0M110 60Q135 90 130 120M0 370Q60 370 95 340M260 80L285 35L345 110M430 12Q430 140 500 160L520 215M440 65L525 75M525 75L545 125L500 160M545 125L590 150M430 15Q530 20 525 75M615 12Q620 50 740 95M720 50L690 12M820 12Q850 60 830 95M940 95L1000 55Q1030 12 1110 15M1000 60Q980 90 1015 92Q1050 85 1020 65M1075 65L1105 60L1110 95M1075 65L1080 95M1110 60Q1180 -20 1300 80Q1290 100 1270 85Q1240 80 1230 95M1375 12Q1420 80 1500 95M1470 12L1545 38M0 520L65 522L25 555M135 555Q200 480 270 470Q370 510 350 555M225 555Q235 510 270 515Q310 520 315 555M245 555Q250 530 270 532Q290 535 295 555M465 555Q460 510 475 515Q490 520 495 545Q500 510 520 515Q530 530 520 555M540 440Q510 460 530 490Q560 530 600 500M1165 518Q1230 570 1290 518M1125 555H1155M1535 515L1550 555",
    ],
  },
  {
    at: "translate(540 2010)", sx: 2.904, sy: 3,
    dots: "558 27 9,1486 15 9,1380 90 9,1090 520 6",
    lines: [
      "M38 30Q100 10 110 0M100 95Q190 70 220 12M310 95Q400 30 475 12L410 95M475 12L480 95M640 95L632 40Q640 20 700 12M820 0L835 95M665 35L688 62M688 35L665 62M885 5Q900 20 940 15Q930 60 965 62M945 95L990 45L1070 75L1135 15L1250 95M1235 12L1250 90M1300 10L1320 30L1360 0M1440 135Q1500 80 1565 40M1475 160Q1560 140 1565 200M1520 370Q1545 375 1568 370M1500 185L1525 180M1520 215L1550 200M0 550L45 518M170 520Q180 545 200 540L215 530L235 555Q260 550 262 530M362 518Q400 570 432 518M490 530L520 555Q520 515 560 515Q595 520 605 555M712 518Q720 530 740 525L830 515M1265 518L1275 555M1280 518L1292 555M1420 490L1435 555M1438 480L1452 555M1535 512L1568 515M1535 512L1565 555M1180 545V555M985 555Q1000 548 1020 555",
    ],
  },
];

const Wallpaper = () => (
  <Backdrop viewBox="0 252 1080 1944" preserveAspectRatio="xMaxYMax slice" aria-hidden="true">
    {patches.map((p) => (
      <g key={p.at} transform={`${p.at} scale(${1 / p.sx} ${1 / p.sy})`}>
        {p.dots.split(",").map((d) => {
          const [x, y, r] = d.split(" ").map(Number);
          return <ellipse key={d} cx={x} cy={y} rx={r * p.sx} ry={r * p.sy} />;
        })}
        {p.lines.map((d) => (
          <path key={d} d={d} />
        ))}
      </g>
    ))}
  </Backdrop>
);

/* ---------- screen ---------- */

export default function App() {
  return (
    <Screen dir="rtl" lang="he">
      <GlobalStyle />
      <StatusBar dir="ltr">
        <StatusGroup $gap={12}>
          <Battery>
            73
            <Leaf />
          </Battery>
          <Signal />
          <Wifi />
        </StatusGroup>
        <StatusGroup $gap={13}>
          <Dot />
          <Tesla />
          <Ear />
          <Capture />
          <Clock>19:33</Clock>
        </StatusGroup>
      </StatusBar>

      <Header>
        <button aria-label="חזרה"><BackArrow /></button>
        <Avatar><AvatarLogo /></Avatar>
        <Contact>
          <ContactName>מבריק עם גל...</ContactName>
          <ContactNote>חשבון עסקי</ContactNote>
        </Contact>
        <HeaderActions>
          <button aria-label="חנות"><Store /></button>
          <CallGroup>
            <button aria-label="אפשרויות שיחה"><DropArrow /></button>
            <button aria-label="שיחה"><Phone /></button>
          </CallGroup>
          <button aria-label="עוד"><More /></button>
        </HeaderActions>
      </Header>

      <Conversation>
        <Wallpaper />
        <Thread>
          <MessageRow>
            <ForwardButton aria-label="העברה"><Forward /></ForwardButton>
            <Bubble>
              <Preview>
                <PreviewTitle>מחפשת מנקה באזור בת ים ...</PreviewTitle>
                <PreviewText>מחפשת מנקה באזור בת ים קבועה יסודית!</PreviewText>
                <PreviewSource>
                  <LinkIcon />
                  <span>tinyurl.com</span>
                </PreviewSource>
              </Preview>
              <MessageText>
                <Line $emoji><Target /><span>נמצא פוסט מתאים</span></Line>
                <Line>עבורך !</Line>
                <Line>הממליצים שלכם כבר</Line>
                <Line>המליצו עליכם בפוסט ?</Line>
                <Line>מומלץ וחשוב להגיב לפוסט</Line>
                <Line $emoji>
                  <EmojiPair><Gift /><Fire /></EmojiPair>
                  <EmojiPair><IdCard /><Sparkles /></EmojiPair>
                  <Eyes />
                  <Rocket />
                  <Collision />
                </Line>
                <BlankLine />
                <Line $emoji><Pushpin /><span>קבוצה: מנקה לבית,</span></Line>
                <Line>עוזרת בית, משק בית.</Line>
                <Line>פורום הניקיון הגדול</Line>
                <Line $emoji><IndexDividers /><span>קטגוריה: גל שרותי</span></Line>
                <Line>ניקיון</Line>
                <Line $emoji><Silhouette /><span>מפרסם: לא ידוע</span></Line>
                <Line $emoji><Memo /><span>מחפשת מנקה באזור</span></Line>
                <Line>בת ים קבועה יסודית!</Line>
                <Line $emoji $ltr><LinkEmoji /><MessageLink href="#link">https://tinyurl.com</MessageLink></Line>
                <Line $ltr><MessageLink href="#link">/2cdc3mxl</MessageLink></Line>
              </MessageText>
              <Receipt><Ticks /><time>19:00</time></Receipt>
            </Bubble>
          </MessageRow>
          <Composer onSubmit={(e) => e.preventDefault()}>
            <Field>
              <button type="button" aria-label="מדבקות"><Sticker /></button>
              <Caret />
              <MessageInput placeholder="הודעה" aria-label="הודעה" />
              <FieldActions>
                <button type="button" aria-label="צירוף קובץ"><Clip /></button>
                <button type="button" aria-label="מצלמה"><Camera /></button>
              </FieldActions>
            </Field>
            <MicButton type="button" aria-label="הקלטה"><Mic /></MicButton>
          </Composer>
        </Thread>
      </Conversation>

      <SystemNav dir="ltr">
        <button aria-label="יישומים אחרונים">
          <svg width="44" height="48" viewBox="0 0 44 48" stroke="currentColor" strokeWidth="5" strokeLinecap="round">
            <path d="M3 3V45M22 3V45M41 3V45" />
          </svg>
        </button>
        <button aria-label="בית">
          <svg width="50" height="50" viewBox="0 0 50 50" fill="none" stroke="currentColor" strokeWidth="5">
            <rect x="3" y="3" width="44" height="44" rx="15" />
          </svg>
        </button>
        <button aria-label="אחורה">
          <svg width="32" height="50" viewBox="0 0 32 50" fill="none" stroke="currentColor" strokeWidth="5" strokeLinecap="round">
            <path d="M3 3L29 25L2 47" />
          </svg>
        </button>
      </SystemNav>
    </Screen>
  );
}
